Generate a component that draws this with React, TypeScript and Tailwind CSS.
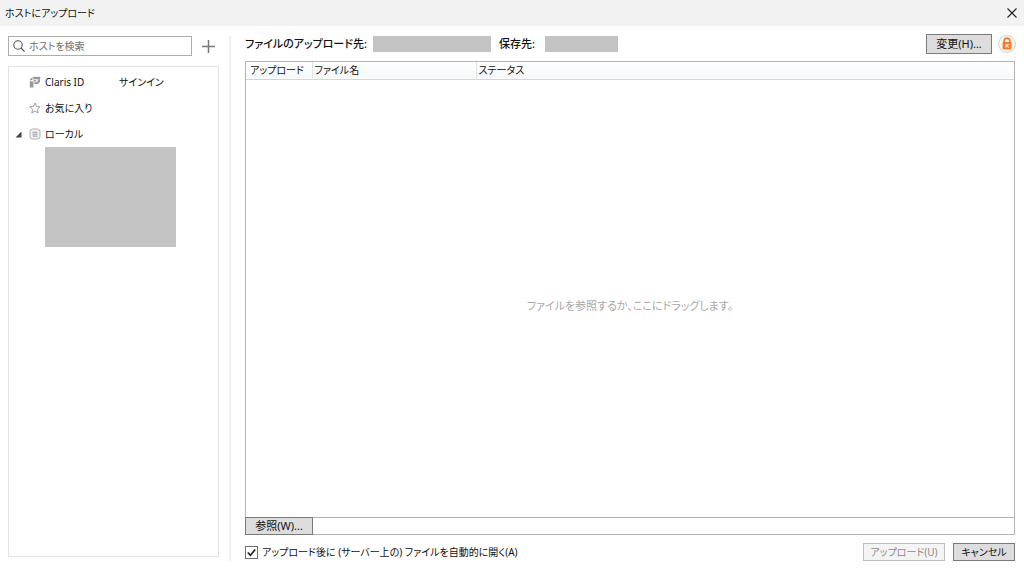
import { useState } from 'react';

const buttonClass = 'flex shrink-0 items-center justify-center whitespace-nowrap border border-[#7a7a7a] bg-[#dddddd] text-[#111111]';

const SearchIcon = () => (
  <svg className="h-3 w-3 shrink-0" viewBox="0 0 12 12" fill="none" stroke="#555555" strokeWidth="1.1">
    <circle cx="5" cy="5" r="4.2" />
    <path d="M8 8l3.6 3.6" />
  </svg>
);

const ClarisIcon = () => (
  <svg className="h-3 w-3 shrink-0" viewBox="0 0 12 12" fill="#999999">
    <path d="M0.8 3.4L3.6 1v2.8L0.8 4.6zM0.8 5.2h3.6v6.2H0.8z" />
    <path d="M4.2 0.8h7v2.4h-7z" />
    <path d="M4.8 3.8h2.4v1.6H4.8zM8.8 3.2h2.2v2.6L8.8 8H5.2V6.2h2.4l1.2-1z" />
  </svg>
);

const StarIcon = () => (
  <svg className="h-3 w-3 shrink-0" viewBox="0 0 12 12" fill="none" stroke="#a0a0a0" strokeWidth="1" strokeLinejoin="round">
    <path d="M6 1l1.5 3.4 3.7.4-2.8 2.5.8 3.7L6 9.1 2.8 11l.8-3.7L.8 4.8l3.7-.4z" />
  </svg>
);

const HostIcon = () => (
  <svg className="h-3 w-3 shrink-0" viewBox="0 0 12 12" fill="none" stroke="#b0b0b0">
    <rect x="1" y="1" width="10" height="10" rx="2.5" fill="#f2f2f2" />
    <path d="M3.5 4.3h5M3.5 6.2h5M3.5 8.1h5" stroke="#999999" />
  </svg>
);

const LockIcon = () => (
  <svg className="h-[18px] w-[18px] shrink-0" viewBox="0 0 18 18" role="img" aria-label="保護されていない接続">
    <circle cx="9" cy="9" r="8.4" fill="#fafafa" stroke="#cfcfcf" />
    <path d="M6.2 8V6a2.8 2.8 0 0 1 5.6 0V8" fill="none" stroke="#ff7a1f" strokeWidth="1.8" />
    <rect x="4.6" y="7" width="8.8" height="7.4" rx="0.6" fill="#ff7a1f" />
    <path d="M7.4 9.2l3.2 3.2M10.6 9.2l-3.2 3.2" stroke="#ffffff" strokeWidth="1.1" />
  </svg>
);

const App = () => {
  const [autoOpen, setAutoOpen] = useState(true);
  const [expanded, setExpanded] = useState(true);

  return (
    <div className="flex h-screen flex-col bg-white font-['Noto_Sans','Noto_Sans_CJK_JP',sans-serif] text-[11px] leading-4 text-[#111111] [font-feature-settings:'palt']">
      {/* Title bar */}
      <header className="flex h-[26px] shrink-0 items-center justify-between bg-[#f2f2f2] pr-[7px] pl-[5px]">
        <h1 className="text-[10px]">ホストにアップロード</h1>
        <button type="button" aria-label="閉じる">
          <svg className="h-[10px] w-[10px]" viewBox="0 0 10 10" stroke="#222222" strokeWidth="1.1">
            <path d="M0.5 0.5l9 9M9.5 0.5l-9 9" />
          </svg>
        </button>
      </header>

      <div className="flex min-h-0 flex-1 pr-2 pl-2">
        {/* Hosts */}
        <aside className="flex w-[211px] shrink-0 flex-col pt-[10px] pb-3">
          <div className="flex h-5 items-center justify-between pr-1">
            <label className="flex h-5 w-[184px] items-center gap-1 border border-[#adadad] px-1">
              <SearchIcon />
              <input
                type="text"
                aria-label="ホストを検索"
                placeholder="ホストを検索"
                className="w-full min-w-0 text-[10px] outline-none placeholder:text-[#6d6d6d]"
              />
            </label>
            <button type="button" aria-label="ホストを追加">
              <svg className="h-[13px] w-[13px]" viewBox="0 0 13 13" stroke="#777777" strokeWidth="1.5">
                <path d="M6.5 0v13M0 6.5h13" />
              </svg>
            </button>
          </div>

          <ul className="mt-[10px] flex-1 border border-[#e3e3e3] pt-[2px] text-[10px]">
            <li className="flex h-[26px] items-center gap-1 pl-5">
              <ClarisIcon />
              <span className="w-[70px]">Claris ID</span>
              <a href="#signin">サインイン</a>
            </li>
            <li className="flex h-[26px] items-center gap-1 pl-5">
              <StarIcon />
              <span>お気に入り</span>
            </li>
            <li>
              <div className="flex h-[26px] items-center gap-1 pl-[6px]">
                <button type="button" aria-label="ローカル" aria-expanded={expanded} onClick={() => setExpanded(!expanded)} className="w-[10px]">
                  <svg className="h-[7px] w-[7px]" viewBox="0 0 7 7" fill="#444444">
                    <path d="M6.5 0.5v6h-6z" />
                  </svg>
                </button>
                <HostIcon />
                <span>ローカル</span>
              </div>
              {expanded && <div className="ml-9 h-[100px] w-[131px] bg-[#c3c3c3]" />}
            </li>
          </ul>
        </aside>

        <div className="mt-[10px] mr-[14px] mb-2 ml-[10px] w-[2px] shrink-0 bg-[#f0f0f0]" />

        {/* Files */}
        <main className="flex min-w-0 flex-1 flex-col pt-2 pb-2">
          <div className="flex h-5 shrink-0 items-center text-[11px] font-medium whitespace-nowrap">
            <span className="w-32">ファイルのアップロード先:</span>
            <div className="h-4 w-[118px] bg-[#c3c3c3]" />
            <span className="ml-2 w-[46px]">保存先:</span>
            <div className="h-4 w-[73px] bg-[#c3c3c3]" />
            <div className="ml-auto flex items-center gap-[6px] font-normal">
              <button type="button" className={`${buttonClass} h-5 w-[66px]`}>変更(H)...</button>
              <LockIcon />
            </div>
          </div>

          <section className="mt-[7px] mr-[1px] flex min-h-0 flex-1 flex-col border border-[#b4b4b4]">
            <table className="w-full table-fixed border-collapse text-left text-[10px]">
              <colgroup>
                <col className="w-[66px]" />
                <col className="w-[164px]" />
                <col />
              </colgroup>
              <thead>
                <tr className="h-[17px] border-b border-[#d5d5d5] bg-linear-to-b from-white to-[#f7f8fa]">
                  <th className="border-r border-[#e3e3e3] pl-1 font-normal">アップロード</th>
                  <th className="border-r border-[#e3e3e3] pl-[2px] font-normal">ファイル名</th>
                  <th className="pl-[2px] font-normal">ステータス</th>
                </tr>
              </thead>
            </table>
            <div className="flex flex-1 items-center justify-center pt-4 text-[11px] text-[#a8a8a8]">
              ファイルを参照するか、ここにドラッグします。
            </div>
            <div className="h-[17px] shrink-0 border-t border-[#b4b4b4]">
              <button type="button" className={`${buttonClass} -mt-px -ml-px h-[18px] w-[68px]`}>参照(W)...</button>
            </div>
          </section>

          <div className="mt-2 flex h-[18px] shrink-0 items-center justify-between pr-[1px] text-[10px]">
            <label className="flex items-center gap-1 whitespace-nowrap">
              <span className="grid h-[13px] w-[13px]">
                <input
                  type="checkbox"
                  checked={autoOpen}
                  onChange={(e) => setAutoOpen(e.target.checked)}
                  className="col-start-1 row-start-1 h-[13px] w-[13px] appearance-none border border-[#707070] bg-white"
                />
                {autoOpen && (
                  <svg className="pointer-events-none col-start-1 row-start-1 h-[13px] w-[13px]" viewBox="0 0 13 13" fill="none" stroke="#222222" strokeWidth="1.7">
                    <path d="M2.8 6.5l2.6 2.8 4.8-5.8" />
                  </svg>
                )}
              </span>
              アップロード後に (サーバー上の) ファイルを自動的に開く(A)
            </label>
            <div className="flex gap-2">
              <button type="button" disabled className="flex h-[18px] w-[82px] items-center justify-center border border-[#bfbfbf] bg-[#f4f4f4] text-[#8c8c8c]">
                アップロード(U)
              </button>
              <button type="button" className={`${buttonClass} h-[18px] w-[62px]`}>キャンセル</button>
            </div>
          </div>
        </main>
      </div>
    </div>
  );
};

export default App;
